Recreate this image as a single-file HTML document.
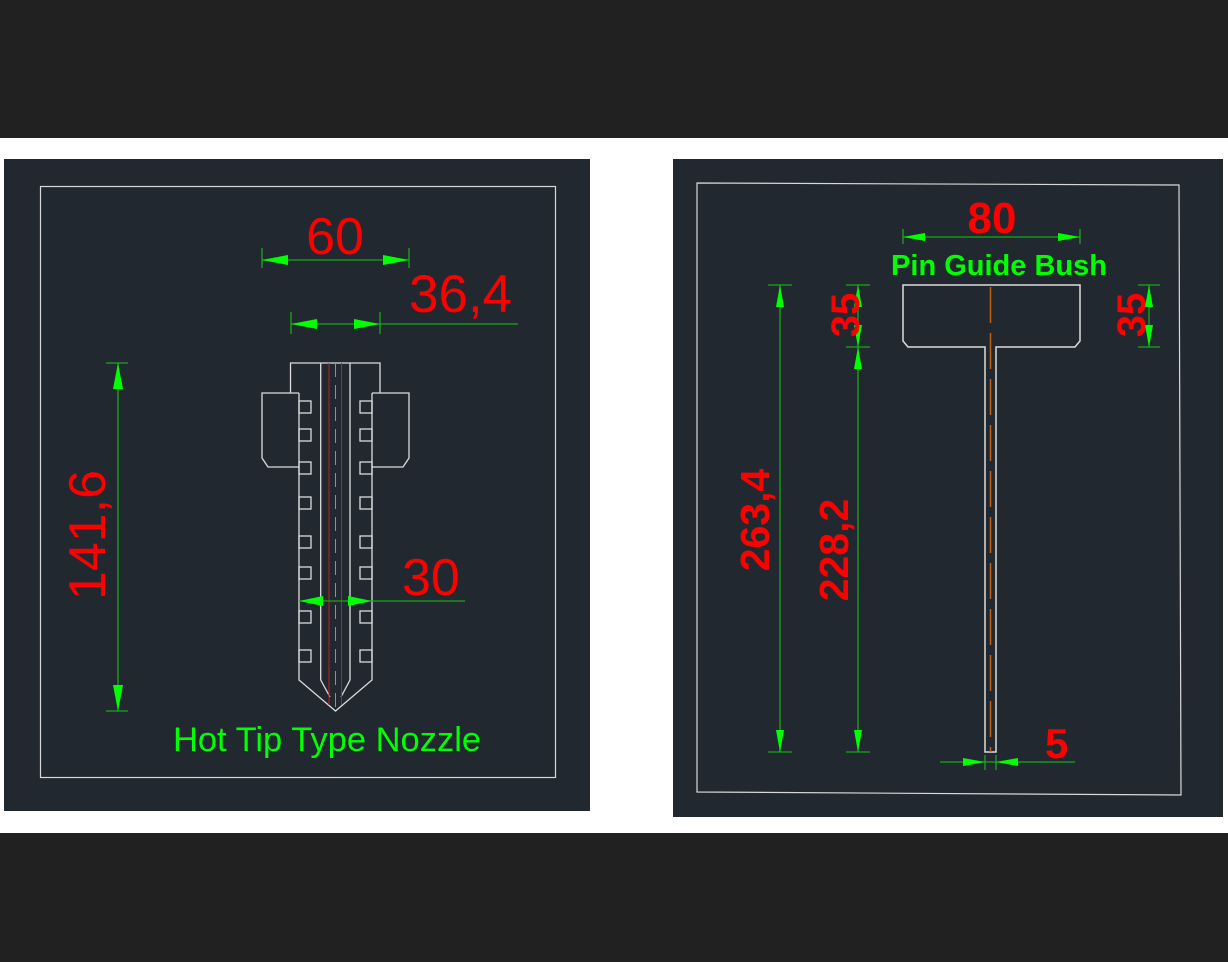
<!DOCTYPE html>
<html><head><style>
html,body{margin:0;padding:0;background:#fff;width:1228px;height:962px;overflow:hidden}
svg{display:block}
text{font-family:"Liberation Sans",sans-serif}
</style></head><body>
<svg width="1228" height="962" viewBox="0 0 1228 962" xmlns="http://www.w3.org/2000/svg">
<rect x="0" y="0" width="1228" height="138" fill="#212121"/>
<rect x="0" y="138" width="1228" height="695" fill="#fff"/>
<rect x="0" y="833" width="1228" height="129" fill="#212121"/>
<!-- left panel -->
<rect x="4" y="159" width="586" height="652" fill="#212830"/>
<rect x="40.5" y="186.5" width="515" height="591" fill="none" stroke="#d8d8d8" stroke-width="1.2"/>
<g fill="none" stroke="#dcdcdc" stroke-width="1.3">
<path d="M290.5 393 V363 H380 V393"/>
<path d="M299 393 H262 V458 L268 467 H299"/>
<path d="M372 393 H409 V458 L403 467 H372"/>
<path d="M299 393 V680 L335.5 711 L372 680 V393"/>
<path d="M320.7 363 V680 L330 697"/>
<path d="M350 363 V680 L341 697"/>
<g>
<rect x="299" y="401" width="12" height="12"/><rect x="299" y="429" width="12" height="12"/><rect x="299" y="462" width="12" height="12"/><rect x="299" y="497" width="12" height="12"/><rect x="299" y="536" width="12" height="12"/><rect x="299" y="567" width="12" height="12"/><rect x="299" y="611" width="12" height="12"/><rect x="299" y="650" width="12" height="12"/>
<rect x="360" y="401" width="12" height="12"/><rect x="360" y="429" width="12" height="12"/><rect x="360" y="462" width="12" height="12"/><rect x="360" y="497" width="12" height="12"/><rect x="360" y="536" width="12" height="12"/><rect x="360" y="567" width="12" height="12"/><rect x="360" y="611" width="12" height="12"/><rect x="360" y="650" width="12" height="12"/>
</g>
</g>
<path d="M329 363 V705 M341.5 363 V705" stroke="#c0201c" stroke-width="1"/>
<path d="M335.5 363 V711" stroke="#e08020" stroke-width="1" stroke-dasharray="14,8"/>
<g stroke="#1aa61a" stroke-width="1.3" fill="none">
<path d="M262 260 H409 M262 248 V268 M409 248 V268"/>
<path d="M291 324 H518 M291 312 V334 M380 312 V334"/>
<path d="M118 363 V711 M106 363 H128 M106 711 H128"/>
<path d="M299 601 H465"/>
</g>
<g fill="#00ff00">
<path d="M262 260 L288 255 L288 265Z M409 260 L383 255 L383 265Z"/>
<path d="M291 324 L317 319 L317 329Z M380 324 L354 319 L354 329Z"/>
<path d="M118 363 L113 389 L123 389Z M118 711 L113 685 L123 685Z"/>
<path d="M299 601 L323 596 L323 606Z M372 601 L348 596 L348 606Z"/>
</g>
<g fill="#ff0000" font-size="52">
<text x="335" y="254" text-anchor="middle">60</text>
<text x="409" y="312" font-size="53">36,4</text>
<text x="402" y="595">30</text>
<text transform="translate(105,535) rotate(-90)" text-anchor="middle">141,6</text>
</g>
<text x="327" y="751" fill="#00ff00" font-size="34.5" text-anchor="middle">Hot Tip Type Nozzle</text>
<!-- right panel -->
<rect x="673" y="159" width="550" height="658" fill="#212830"/>
<path d="M697 183 L1179 185 L1181 795 L697 792 Z" fill="none" stroke="#d8d8d8" stroke-width="1.2"/>
<path d="M985 752 V347 H908 L903 341 V285 H1080 V341 L1075 347 H996 V752 Z" fill="none" stroke="#dcdcdc" stroke-width="1.5"/>
<path d="M990.5 287 V752" stroke="#c06010" stroke-width="1.5" stroke-dasharray="36,10"/>
<g stroke="#1aa61a" stroke-width="1.3" fill="none">
<path d="M903 237 H1080 M903 229 V244 M1080 229 V244"/>
<path d="M780 285 V752 M768 285 H792 M768 752 H792"/>
<path d="M858 285 V752 M846 285 H870 M846 347 H870 M846 752 H870"/>
<path d="M1149 285 V347 M1138 285 H1160 M1138 347 H1160"/>
<path d="M940 762 H1075 M985 755 V770 M996 755 V770"/>
</g>
<g fill="#00ff00">
<path d="M903 237 L925 233 L925 241Z M1080 237 L1058 233 L1058 241Z"/>
<path d="M780 285 L776 307 L784 307Z M780 752 L776 730 L784 730Z"/>
<path d="M858 285 L854 307 L862 307Z M858 347 L854 325 L862 325Z M858 347 L854 369 L862 369Z M858 752 L854 730 L862 730Z"/>
<path d="M1149 285 L1145 307 L1153 307Z M1149 347 L1145 325 L1153 325Z"/>
<path d="M985 762 L963 758 L963 766Z M996 762 L1018 758 L1018 766Z"/>
</g>
<g fill="#ff0000" font-weight="bold">
<text x="992" y="233" text-anchor="middle" font-size="44">80</text>
<text x="1045" y="758" font-size="42">5</text>
<text transform="translate(769,520) rotate(-90)" text-anchor="middle" font-size="41">263,4</text>
<text transform="translate(848,550) rotate(-90)" text-anchor="middle" font-size="41">228,2</text>
<text transform="translate(859,315) rotate(-90)" text-anchor="middle" font-size="40">35</text>
<text transform="translate(1145,315) rotate(-90)" text-anchor="middle" font-size="40">35</text>
</g>
<text x="999" y="275" fill="#00ff00" font-size="29" font-weight="bold" text-anchor="middle">Pin Guide Bush</text>
</svg>
</body></html>
